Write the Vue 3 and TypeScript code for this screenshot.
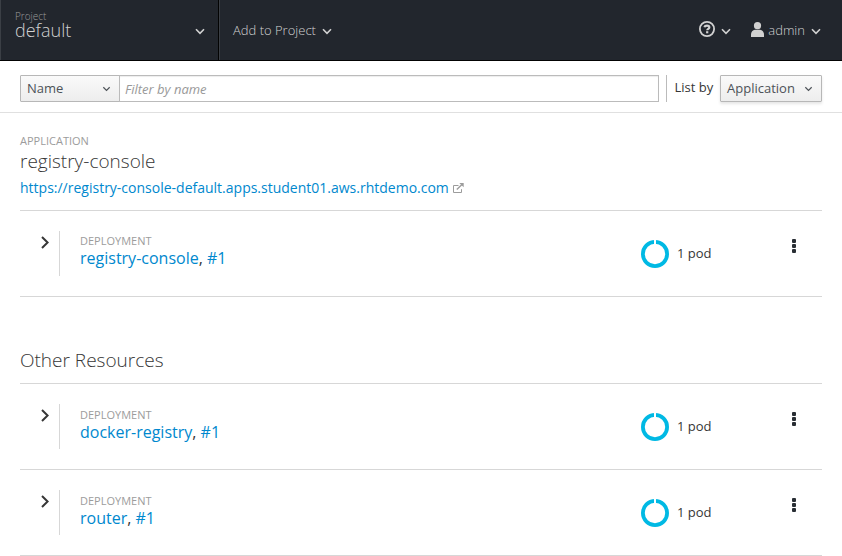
<script setup lang="ts">
interface Deployment {
  name: string
  revision: string
  pods: number
}
interface Section {
  key: string
  kicker?: string
  title: string
  url?: string
  deployments: Deployment[]
}

const sections: Section[] = [
  {
    key: 'app',
    kicker: 'Application',
    title: 'registry-console',
    url: 'https://registry-console-default.apps.student01.aws.rhtdemo.com',
    deployments: [{ name: 'registry-console', revision: '#1', pods: 1 }],
  },
  {
    key: 'other',
    title: 'Other Resources',
    deployments: [
      { name: 'docker-registry', revision: '#1', pods: 1 },
      { name: 'router', revision: '#1', pods: 1 },
    ],
  },
]
</script>

<template>
  <div class="page">
    <header class="navbar">
      <div class="project">
        <div class="project-text">
          <span class="project-label">Project</span>
          <span class="project-name">default</span>
        </div>
        <svg class="caret" viewBox="0 0 10 7"><path d="M1 1.2 5 5.3 9 1.2" /></svg>
      </div>
      <div class="add">
        <span>Add to Project</span>
        <svg class="caret" viewBox="0 0 10 7"><path d="M1 1.2 5 5.3 9 1.2" /></svg>
      </div>
      <div class="help">
        <svg class="help-icon" viewBox="0 0 16 16">
          <circle cx="8" cy="8" r="7.1" />
          <path d="M5.400 6.300C5.700 5.200 6.700 4.700 8 4.700c1.400 0 2.300.7 2.300 1.700 0 1.400-2.100 1.400-2.100 2.900" class="hook" />
          <rect x="7.1" y="10.2" width="2.2" height="2.1" />
        </svg>
        <svg class="caret" viewBox="0 0 10 7"><path d="M1 1.2 5 5.3 9 1.2" /></svg>
      </div>
      <div class="user">
        <svg class="user-icon" viewBox="0 0 13 15">
          <circle cx="6.5" cy="3.7" r="3.6" />
          <path d="M0 15v-2.4C0 10 1.600 8.300 4 7.800h5c2.400.5 4 2.200 4 4.800V15z" />
        </svg>
        <span>admin</span>
        <svg class="caret" viewBox="0 0 10 7"><path d="M1 1.2 5 5.3 9 1.2" /></svg>
      </div>
    </header>

    <div class="toolbar">
      <button class="btn btn-name" type="button">
        <span>Name</span>
        <svg class="caret small" viewBox="0 0 10 7"><path d="M1.300 1.500 5 5.200 8.700 1.500" /></svg>
      </button>
      <input class="filter" type="text" placeholder="Filter by name" />
      <div class="list-by">
        <span class="list-label">List by</span>
        <button class="btn btn-app" type="button">
          <span>Application</span>
          <svg class="caret small" viewBox="0 0 10 7"><path d="M1.300 1.500 5 5.200 8.700 1.500" /></svg>
        </button>
      </div>
    </div>

    <main>
      <section v-for="s in sections" :key="s.key" :class="s.key">
        <div class="heading">
          <div v-if="s.kicker" class="kicker">{{ s.kicker }}</div>
          <h2>{{ s.title }}</h2>
          <div v-if="s.url" class="route">
            <a>{{ s.url }}</a>
            <svg class="external" viewBox="0 0 11 10">
              <path d="M5.500 2.500H.5v7h8V6.200" />
              <path d="M3.800 6.400 9 1.400" class="shaft" />
              <path d="M6.300 0H10.700V4.300z" class="tip" />
            </svg>
          </div>
        </div>
        <div v-for="d in s.deployments" :key="d.name" class="row">
          <div class="toggle">
            <svg viewBox="0 0 8 13"><path d="M1 1 6.600 6.500 1 12" /></svg>
          </div>
          <div class="info">
            <div class="kicker">Deployment</div>
            <div class="name"><a>{{ d.name }}</a>, <a>{{ d.revision }}</a></div>
          </div>
          <div class="pods">
            <svg class="donut" viewBox="0 0 28 28">
              <circle cx="14" cy="14" r="12.100" />
              <path d="M14 0v5" />
            </svg>
            <span class="pod-count">{{ d.pods }} pod</span>
          </div>
          <div class="kebab">
            <i></i><i></i><i></i>
          </div>
        </div>
      </section>
    </main>
  </div>
</template>

<style>
body {
  background: #fff;
  overflow: hidden;
}
</style>

<style scoped>
* {
  box-sizing: border-box;
}
.page {
  height: 556px;
  overflow: hidden;
  font-family: 'Open Sans', sans-serif;
  font-size: 13px;
  line-height: 20px;
  color: #363636;
}
svg {
  display: block;
  flex: none;
  fill: none;
}
.caret {
  width: 10px;
  height: 7px;
  stroke: #d1d1d1;
  stroke-width: 1.6;
}
.caret.small {
  width: 9px;
  height: 6px;
  stroke: #4d5258;
  stroke-width: 1.4;
}
.navbar {
  display: flex;
  height: 61px;
  background: #22262d;
  border-bottom: 1px solid #030303;
  color: #d1d1d1;
  font-weight: 300;
}
.project {
  display: flex;
  justify-content: space-between;
  width: 219px;
  padding: 0 13px 0 14px;
  border-left: 1px solid #3b3f45;
  border-right: 1px solid #030303;
}
.project .caret {
  margin-top: 28px;
}
.project-text {
  display: flex;
  flex-direction: column;
  padding-top: 10px;
}
.project-label {
  font-size: 10px;
  line-height: 12px;
  color: #9c9c9c;
}
.project-name {
  font-size: 18px;
  line-height: 16px;
}
.add {
  display: flex;
  align-items: center;
  flex: 1;
  gap: 6px;
  padding-left: 13px;
  border-left: 1px solid #3b3f45;
}
.add .caret,
.help .caret,
.user .caret {
  margin-top: 3px;
}
.help {
  display: flex;
  align-items: center;
  gap: 6px;
  margin-right: 20px;
}
.help-icon {
  width: 16px;
  height: 16px;
  margin-top: -2px;
  stroke: #d1d1d1;
  stroke-width: 1.8;
}
.help-icon .hook {
  stroke-width: 2.2;
}
.help-icon rect {
  fill: #d1d1d1;
  stroke: none;
}
.user {
  display: flex;
  align-items: center;
  padding-right: 21px;
}
.user-icon {
  width: 13px;
  height: 15px;
  margin: -1px 4px 0 0;
  fill: #d1d1d1;
}
.user .caret {
  margin-left: 6px;
}
.toolbar {
  display: flex;
  height: 52px;
  padding: 14px 20px 0;
  border-bottom: 1px solid #e0e0e0;
}
.btn {
  display: flex;
  align-items: center;
  justify-content: space-between;
  height: 27px;
  padding: 0 8px 0 6px;
  border: 1px solid #b7b7b7;
  border-radius: 1px;
  background: linear-gradient(#fafafa, #ededed);
  color: #4d5258;
  font: 13px/25px 'Open Sans', sans-serif;
}
.btn-name {
  width: 100px;
}
.btn-app {
  width: 102px;
  box-shadow: 0 2px 3px rgba(3, 3, 3, 0.1);
}
.filter {
  flex: 1;
  min-width: 0;
  height: 27px;
  margin-left: -1px;
  padding: 0 5px;
  border: 1px solid #bbb;
  box-shadow: inset 0 1px 1px rgba(3, 3, 3, 0.075);
  font: 13px 'Open Sans', sans-serif;
}
.filter::placeholder {
  color: #999;
  font-style: italic;
  opacity: 1;
}
.list-by {
  display: flex;
  justify-content: space-between;
  width: 156px;
  height: 27px;
  margin-left: 7px;
  padding-left: 7.5px;
  border-left: 1px solid #bbb;
}
.list-label {
  line-height: 25px;
}
main {
  padding: 0 20px;
}
.heading {
  border-bottom: 1px solid #d7d7d7;
}
.app .heading {
  height: 98px;
  padding-top: 21px;
}
.other .heading {
  height: 87px;
  padding-top: 51px;
}
.kicker {
  font-size: 11px;
  line-height: 14px;
  color: #9c9c9c;
  text-transform: uppercase;
}
h2 {
  margin: 0;
  font-size: 19px;
  font-weight: 300;
  line-height: 24px;
}
.app h2 {
  margin-top: 1px;
}
a {
  color: #0088ce;
}
.route {
  display: flex;
  align-items: center;
  gap: 4px;
  margin-top: 4px;
  font-size: 14px;
  line-height: 22px;
}
.external {
  width: 11px;
  height: 10px;
  stroke: #9c9c9c;
  stroke-width: 1;
}
.external .shaft {
  stroke-width: 1.4;
}
.external .tip {
  fill: #9c9c9c;
  stroke: none;
}
.row {
  display: flex;
  height: 86px;
  padding: 20px 0;
  border-bottom: 1px solid #d7d7d7;
}
.toggle {
  width: 40px;
  padding: 5px 0 0 20.5px;
  border-right: 1px solid #d7d7d7;
}
.toggle svg {
  width: 8px;
  height: 13px;
  stroke: #363636;
  stroke-width: 2;
}
.info {
  width: 561px;
  padding: 3px 0 0 20px;
}
.other .info {
  padding-top: 4px;
}
.name {
  font-size: 16px;
  line-height: 20px;
}
.pods {
  display: flex;
  align-items: center;
  gap: 8px;
  height: 45px;
  padding-left: 20px;
}
.pod-count {
  padding-bottom: 2px;
}
.donut {
  width: 28px;
  height: 28px;
  stroke: #00b9e4;
  stroke-width: 3.8;
}
.donut path {
  stroke: #fff;
  stroke-width: 2;
}
.kebab {
  display: flex;
  flex-direction: column;
  gap: 1px;
  margin-left: auto;
  padding: 8px 26px 0 0;
}
.kebab i {
  width: 4px;
  height: 4px;
  border-radius: 1px;
  background: #292e34;
}
</style>
